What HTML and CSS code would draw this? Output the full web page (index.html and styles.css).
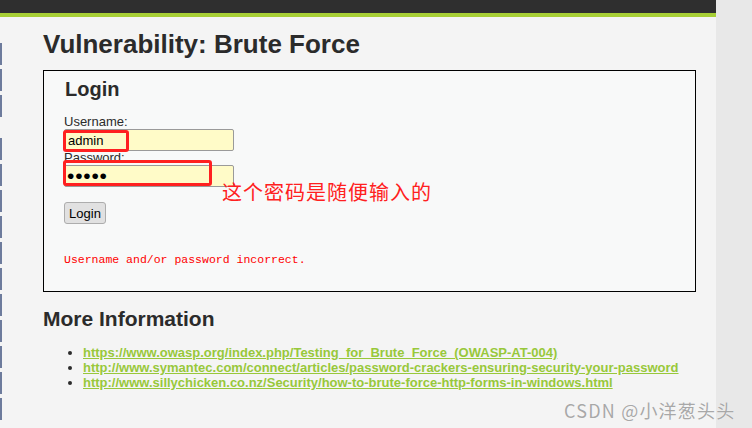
FILE: index.html
```html
<!DOCTYPE html>
<html lang="en">
<head>
<meta charset="utf-8">
<title>Vulnerability: Brute Force</title>
<link rel="stylesheet" href="styles.css">
</head>
<body>
<div class="page">
  <div class="wrap">
    <div class="header"></div>
    <div class="body">
      <div class="menu">
        <div class="group">
          <span class="item"></span><span class="item"></span><span class="item"></span>
        </div>
        <div class="group">
          <span class="item"></span><span class="item"></span><span class="item"></span>
          <span class="item"></span><span class="item"></span><span class="item"></span>
          <span class="item"></span><span class="item"></span><span class="item"></span>
          <span class="item"></span><span class="item"></span>
        </div>
      </div>
      <div class="main">
        <h1 class="title">Vulnerability: Brute Force</h1>
        <div class="vulnerable">
          <h2 class="login-title">Login</h2>
          <form class="form">
            <div class="label">Username:</div>
            <div class="field">
              <input class="input" type="text" value="admin">
              <span class="mark mark-user"></span>
            </div>
            <div class="label label-pass">Password:</div>
            <div class="field">
              <input class="input input-pass" type="password" value="12345">
              <span class="mark mark-pass"></span>
              <span class="note">这个密码是随便输入的</span>
            </div>
            <button class="btn" type="button">Login</button>
          </form>
          <pre class="error">Username and/or password incorrect.</pre>
        </div>
        <h2 class="more">More Information</h2>
        <ul class="links">
          <li><a href="#">https://www.owasp.org/index.php/Testing_for_Brute_Force_(OWASP-AT-004)</a></li>
          <li><a href="#">http://www.symantec.com/connect/articles/password-crackers-ensuring-security-your-password</a></li>
          <li><a href="#">http://www.sillychicken.co.nz/Security/how-to-brute-force-http-forms-in-windows.html</a></li>
        </ul>
      </div>
    </div>
  </div>
  <div class="side"></div>
  <div class="watermark">CSDN @小洋葱头头</div>
</div>
</body>
</html>
```
FILE: styles.css
```css
* { box-sizing: border-box; }
html, body { margin: 0; padding: 0; }
body {
  font-family: "Liberation Sans", Arial, "Noto Sans CJK SC", sans-serif;
  font-size: 13px;
  color: #2b2b2b;
  background: #f4f4f4;
}
.page {
  position: relative;
  display: flex;
  width: 752px;
  height: 428px;
  overflow: hidden;
}
.wrap {
  width: 716px;
  background: #f4f4f4;
}
.side {
  flex: 1;
  background: #e8e8e8;
}
.header {
  height: 17px;
  background: #2f2f2f;
  border-bottom: 4px solid #a7cf35;
}
.body {
  display: flex;
}
.menu {
  width: 2px;
  padding-top: 26px;
}
.group {
  display: flex;
  flex-direction: column;
  gap: 4px;
  margin-bottom: 21px;
}
.item {
  display: block;
  height: 22px;
  background: #6d7b9c;
}
.main {
  margin-left: 41px;
  width: 653px;
}
.title {
  margin: 12px 0 0;
  font-size: 26px;
  line-height: 30px;
  font-weight: bold;
  color: #2b2b2b;
}
.vulnerable {
  margin-top: 11px;
  border: 1px solid #000;
  background: #f8f9f9;
  padding: 6px 20px 0;
  height: 222px;
}
.login-title {
  margin: 0 0 0 1px;
  font-size: 20px;
  line-height: 24px;
  font-weight: bold;
  color: #2b2b2b;
}
.form {
  margin-top: 13px;
}
.label {
  line-height: 15px;
  height: 15px;
}
.label-pass {
  margin-top: -1px;
}
.field {
  position: relative;
  height: 22px;
}
.input {
  display: block;
  width: 170px;
  height: 22px;
  margin: 0;
  padding: 0 3px;
  border: 1px solid #9a9a9a;
  border-radius: 2px;
  background: #fffbc8;
  font-family: "Liberation Sans", Arial, sans-serif;
  font-size: 13px;
  color: #000;
}
.input-pass {
  font-size: 21px;
  letter-spacing: 0.8px;
  padding-left: 2px;
}
.mark {
  position: absolute;
  border: 3px solid #ff2020;
  border-radius: 3px;
}
.mark-user {
  left: -1px;
  top: 1px;
  width: 66px;
  height: 22px;
}
.mark-pass {
  left: -1px;
  top: -5px;
  width: 149px;
  height: 26px;
}
.note {
  position: absolute;
  left: 158px;
  top: 15px;
  white-space: nowrap;
  font-family: "Noto Sans CJK SC", sans-serif;
  font-size: 20px;
  line-height: 24px;
  color: #ff2020;
  letter-spacing: 1px;
}
.btn {
  display: block;
  margin-top: 15px;
  width: 42px;
  height: 22px;
  padding: 0;
  border: 1px solid #adadad;
  border-radius: 3px;
  background: #e1e1e1;
  font-family: "Liberation Sans", Arial, sans-serif;
  font-size: 13px;
  color: #000;
}
.error {
  margin: 29px 0 0;
  font-family: "Liberation Mono", "Courier New", monospace;
  font-size: 11.5px;
  line-height: 14px;
  color: #ff0000;
}
.more {
  margin: 15px 0 0;
  font-size: 21px;
  line-height: 24px;
  font-weight: bold;
  color: #2b2b2b;
}
.links {
  margin: 14px 0 0;
  padding-left: 40px;
  list-style: disc;
}
.links li {
  line-height: 15px;
  font-size: 13px;
}
.links a {
  color: #98c83a;
  font-weight: bold;
  text-decoration: underline;
}
.watermark {
  position: absolute;
  left: 564px;
  top: 398px;
  font-family: "Noto Sans CJK SC", sans-serif;
  font-size: 18px;
  line-height: 24px;
  letter-spacing: 1.2px;
  color: #a8a8a8;
  text-shadow: 0 0 1px #fff;
  white-space: nowrap;
}
```
